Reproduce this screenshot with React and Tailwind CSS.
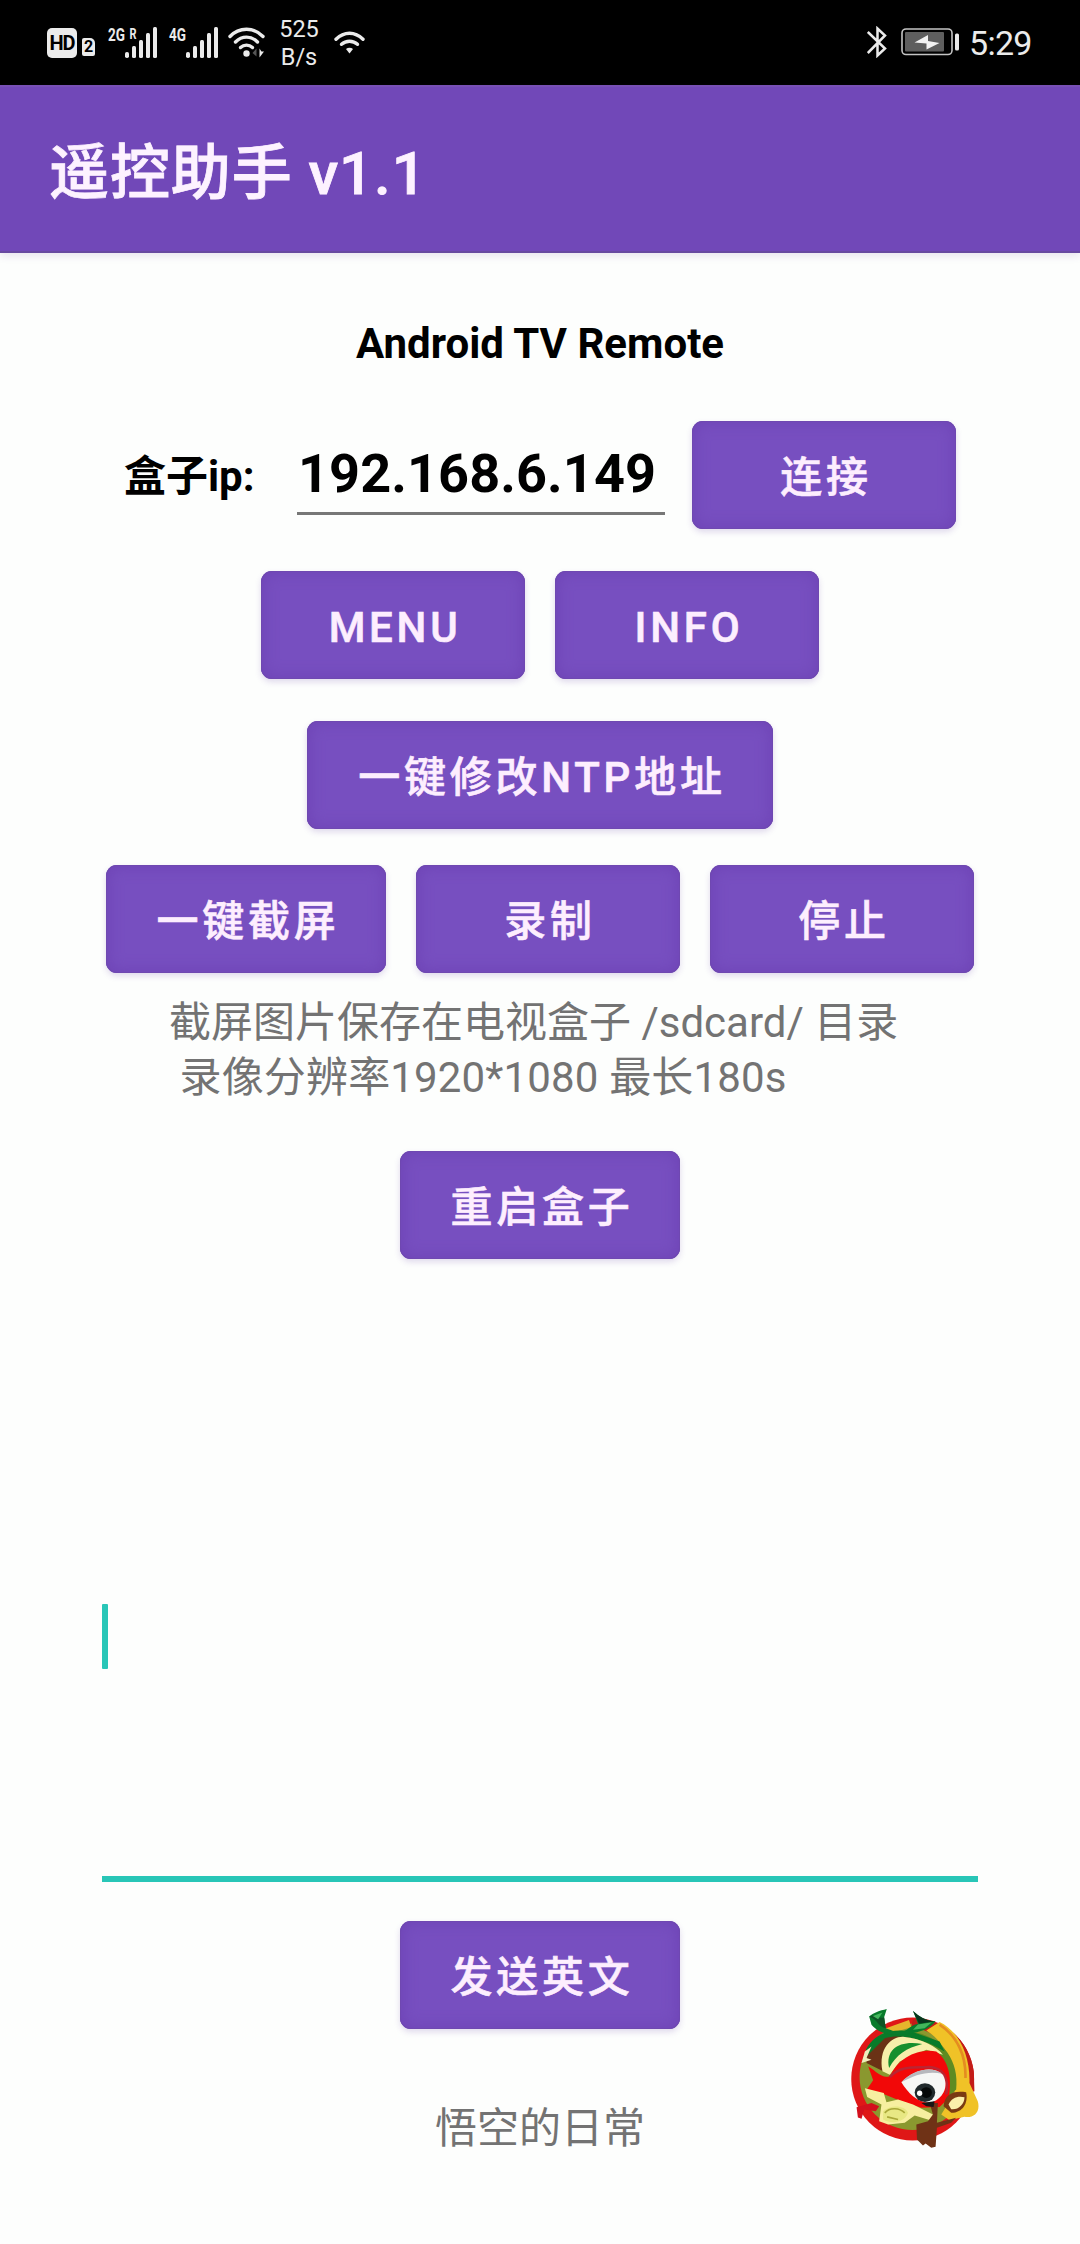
const PURPLE_BUTTON =
  "flex h-[108px] shrink-0 items-center justify-center rounded-[11px] bg-[#774fc0] pt-[5px] pl-[4px] text-[42px] leading-[50px] font-medium tracking-[3.75px] whitespace-nowrap text-[#fdeefe] [-webkit-text-stroke:0.6px_#fdeefe] shadow-[inset_0_0_14px_3px_#6f45b6,inset_0_0_0_1px_#704fa8,0_3px_6px_rgba(90,50,160,0.18)]";

function Button({ children, width = "w-[264px]" }) {
  return <button className={`${PURPLE_BUTTON} ${width}`}>{children}</button>;
}

function HdBadge() {
  return (
    <div className="flex h-[30px] w-[30px] items-center justify-center rounded-[5px] bg-[#ebebeb] font-['Roboto'] text-[20px] leading-[30px] font-bold tracking-[-1px] text-black">
      HD
    </div>
  );
}

function SimBadge() {
  return (
    <div className="mt-[10px] ml-[5px] flex h-[18px] w-[13px] items-center justify-center rounded-[2px] rounded-tr-[5px] bg-[#ebebeb] font-['Roboto'] text-[16px] leading-[18px] font-bold text-black">
      2
    </div>
  );
}

function Signal({ label, roaming }) {
  return (
    <svg width="50" height="38" viewBox="0 -6 50 38" fill="#ebebeb" className="overflow-visible">
      <text x="0" y="14" fontFamily="Roboto" fontWeight="700" fontSize="18" textLength="17" lengthAdjust="spacingAndGlyphs">
        {label}
      </text>
      {roaming && (
        <text x="21.5" y="11.500" fontFamily="Roboto" fontWeight="700" fontSize="15" textLength="7" lengthAdjust="spacingAndGlyphs">
          R
        </text>
      )}
      <rect x="17" y="25" width="4" height="6" rx="1.800" />
      <rect x="24" y="19" width="4" height="12" rx="1.500" />
      <rect x="31" y="13" width="4" height="18" rx="1.500" />
      <rect x="38" y="6" width="4" height="25" rx="1.500" />
      <rect x="45" y="0" width="4" height="31" rx="1.500" />
    </svg>
  );
}

function WifiActive() {
  return (
    <svg width="37" height="31" viewBox="0 0 37 31" fill="none" stroke="#ebebeb" strokeWidth="3.400" strokeLinecap="round">
      <path d="M2 9.500C11 -0.200 26 -0.200 35 9.500" />
      <path d="M7.500 15C14 8.500 23 8.500 29.500 15" />
      <path d="M12.500 20.500C16 17.300 21 17.300 24.500 20.500" />
      <circle cx="18.500" cy="26.500" r="3.200" fill="#ebebeb" stroke="none" />
      <path d="M28.500 21.500v8l-4-3.500z" fill="#555" stroke="none" />
      <path d="M31.500 21.500v9l4.500-6h-2.500z" fill="#ebebeb" stroke="none" />
    </svg>
  );
}

function Wifi() {
  return (
    <svg width="31" height="23" viewBox="0 0 31 23" fill="none" stroke="#ebebeb" strokeWidth="3.400" strokeLinecap="round">
      <path d="M2 8.300C10 0.300 21 0.300 29 8.300" />
      <path d="M7.500 13.300C12 9.200 19 9.200 23.500 13.300" />
      <path d="M15.500 22.500l-3.500-4.500c2-1.800 5-1.800 7 0z" fill="#ebebeb" stroke="none" />
    </svg>
  );
}

function Bluetooth() {
  return (
    <svg width="20" height="32" viewBox="0 0 20 32" fill="none" stroke="#ebebeb" strokeWidth="2.500">
      <path d="M0.800 6L18 22.500L10.500 29.500V2.500L18 9.500L0.800 27" />
    </svg>
  );
}

function Battery() {
  return (
    <svg width="59" height="28" viewBox="0 0 59 28">
      <rect x="1" y="1" width="50" height="25.500" rx="4" fill="none" stroke="#c4c4c4" strokeWidth="1.600" />
      <rect x="4" y="4" width="39" height="19.500" rx="1" fill="#5e5e5e" />
      <path d="M13.500 14.500L27 7v6l11.500 2L25.500 21.500v-6z" fill="#f2f2f2" />
      <rect x="54" y="5.500" width="4" height="17" rx="1.500" fill="#ebebeb" />
    </svg>
  );
}

function StatusBar() {
  return (
    <div className="flex h-[85px] shrink-0 items-start justify-between bg-black pr-[48px] pl-[47px] text-[#ebebeb]">
      <div className="flex items-start pt-[28px]">
        <HdBadge />
        <SimBadge />
        <div className="-mt-[7px] ml-[13px] flex gap-[11px]">
          <Signal label="2G" roaming />
          <Signal label="4G" />
        </div>
        <div className="-mt-px ml-[9px]">
          <WifiActive />
        </div>
        <div className="-mt-[12px] ml-[13px] w-[42px] text-center text-[23.500px] leading-[27.500px]">
          <div>525</div>
          <div>B/s</div>
        </div>
        <div className="mt-[3px] ml-[14px]">
          <Wifi />
        </div>
      </div>
      <div className="flex items-start pt-[26px]">
        <Bluetooth />
        <div className="mt-[2px] ml-[14px]">
          <Battery />
        </div>
        <div className="-mt-[3px] ml-[9px] w-[63px] text-[34px] leading-[40px] tracking-[-0.700px]">5:29</div>
      </div>
    </div>
  );
}

function MonkeyLogo() {
  return (
    <svg width="170" height="170" viewBox="0 0 512 512">
      <circle cx="249" cy="268" r="185" fill="#df1717" />
      <circle cx="249" cy="262" r="160" fill="#8a982f" />
      <path d="M250 88C345 85 420 150 433 245L435 305L405 315C405 210 345 130 245 110z" fill="#c31c18" />
      <path d="M160 118L238 90L245 112L190 128z" fill="#e6b52c" />
      <path d="M290 122L330 96C390 125 423 200 420 280L445 335C455 370 430 387 405 382L360 392L335 375L375 310C380 230 350 160 290 122z" fill="#f0c227" />
      <path d="M330 104C385 140 410 200 408 265" fill="none" stroke="#e58c20" strokeWidth="8" />
      <path d="M260 128C340 145 390 215 380 300L358 320C362 235 325 175 255 150z" fill="#5f8b22" />
      <path d="M112 180L190 125L260 150L200 170L160 245L110 220z" fill="#6a3215" />
      <path d="M108 180C135 130 180 115 245 125L330 155L345 185C280 145 210 132 165 145L115 195z" fill="#087b29" />
      <path d="M158 245C145 175 185 140 220 141C280 148 320 170 340 195L290 180L210 215L180 255z" fill="#f6efaa" />
      <path d="M178 235C165 175 215 150 278 163C230 175 200 195 178 235z" fill="#168f2d" />
      <path d="M115 230C145 250 160 270 182 258C205 205 265 175 320 185C357 212 368 260 358 325L330 352L275 355L215 335L165 315L112 298L130 272z" fill="#f20808" />
      <path d="M180 262C215 225 260 235 300 232C340 235 360 265 350 315" fill="none" stroke="#bb2431" strokeWidth="8" />
      <path d="M215 278C250 240 310 225 340 255C360 290 340 330 300 340C260 338 235 310 215 278z" fill="#f6f7f5" />
      <path d="M215 278C250 240 305 228 338 252C295 243 255 255 215 278z" fill="#b7b8bd" />
      <ellipse cx="286" cy="309" rx="31" ry="28" fill="#20292b" />
      <ellipse cx="290" cy="309" rx="17" ry="16" fill="#050808" />
      <circle cx="270" cy="311" r="8" fill="#fff" />
      <path d="M105 185L125 170L110 205L125 210L95 220z" fill="#f0edbd" />
      <path d="M105 296L162 310L170 338L205 330L250 345L310 375L312 395L255 378L225 400L175 405L148 395L155 345L112 322z" fill="#f7efa0" />
      <path d="M160 365C180 345 225 345 235 370C225 400 185 405 160 390" fill="#e8e884" />
      <path d="M165 370C180 352 210 355 225 370M172 382L205 390" fill="none" stroke="#aaa839" strokeWidth="5" />
      <path d="M80 353L125 340L148 350L138 365L103 360L95 388L84 384z" fill="#d3101d" />
      <path d="M300 340L325 340L322 400L380 385L365 400L322 415L318 472L305 475L288 462L280 468L262 450L260 405L295 395L310 375z" fill="#6f3216" />
      <path d="M275 340L315 335L312 352L290 350z" fill="#191515" />
      <path d="M342 350C345 315 370 302 410 308C417 340 400 370 365 370z" fill="#7a3a13" />
      <path d="M357 345C365 325 385 318 405 323C405 345 385 362 365 359z" fill="#faf0ab" />
      <path d="M118 80C130 68 150 62 171 57L163 82L168 115L195 125C240 130 230 110 265 102L250 63C270 80 285 92 318 94C300 118 270 128 225 133C180 138 145 130 125 105z" fill="#087b2b" />
      <path d="M118 80C140 70 150 90 163 82L168 115C145 112 145 90 118 80z" fill="#0e5425" />
      <path d="M129 78L158 68L145 88zM265 104L307 97L285 115L250 120z" fill="#43b75c" />
      <path d="M250 63C270 80 285 92 318 94L268 102z" fill="#08351d" />
    </svg>
  );
}

export default function App() {
  return (
    <div className="relative flex h-[2244px] w-[1080px] flex-col overflow-hidden bg-[#fdfefd] font-['Roboto','Noto_Sans_CJK_SC',sans-serif]">
      <StatusBar />

      <header className="flex h-[168px] shrink-0 items-center bg-[#7148b8] pt-[9px] pl-[49px] shadow-[inset_0_2px_0_#7850b5,inset_0_-2px_0_#684aa0,0_3px_8px_rgba(80,50,130,0.12)]">
        <h1 className="text-[60px] leading-[70px] font-medium tracking-[0.9px] whitespace-pre text-[#fdf2ff] [-webkit-text-stroke:0.8px_#fdf2ff]">遥控助手 v1.1</h1>
      </header>

      <main className="flex flex-col items-center">
        <h2 className="mt-[66px] text-[42px] leading-[50px] font-bold text-black">Android TV Remote</h2>

        <div className="mt-[52px] flex h-[108px] w-[832px] items-center text-black">
          <label className="w-[173px] pt-[4px] text-[42px] leading-[50px] font-bold whitespace-nowrap">盒子ip:</label>
          <div className="-mt-[13px] h-[92px] w-[368px] border-b-[3px] border-[#777] pt-[19px] pl-[1px] text-[54px] leading-[64px] font-bold tracking-[0.1px]">
            192.168.6.149
          </div>
          <div className="ml-[27px]">
            <Button>连接</Button>
          </div>
        </div>

        <div className="mt-[42px] flex gap-[30px]">
          <Button>MENU</Button>
          <Button>INFO</Button>
        </div>

        <div className="mt-[42px] flex">
          <Button width="w-[466px]">一键修改NTP地址</Button>
        </div>

        <div className="mt-[36px] flex gap-[30px]">
          <Button width="w-[280px]">一键截屏</Button>
          <Button>录制</Button>
          <Button>停止</Button>
        </div>

        <div className="mt-[22px] w-[742px] text-[42px] leading-[55px] font-normal whitespace-pre text-[#737373]">
          <div>截屏图片保存在电视盒子 /sdcard/ 目录</div>
          <div className="tracking-[0.15px]"> 录像分辨率1920*1080 最长180s</div>
        </div>

        <div className="mt-[46px] flex">
          <Button width="w-[280px]">重启盒子</Button>
        </div>

        <div className="mt-[345px] h-[278px] w-[876px] border-b-[6px] border-[#28c6b7]">
          <div className="h-[65px] w-[6px] rounded-[1px] bg-[#28c6b7]" />
        </div>

        <div className="mt-[39px] flex">
          <Button width="w-[280px]">发送英文</Button>
        </div>

        <p className="mt-[75px] text-[42px] leading-[50px] text-[#737373]">悟空的日常</p>
      </main>

      <div className="absolute top-[1990px] left-[830px]">
        <MonkeyLogo />
      </div>
    </div>
  );
}
